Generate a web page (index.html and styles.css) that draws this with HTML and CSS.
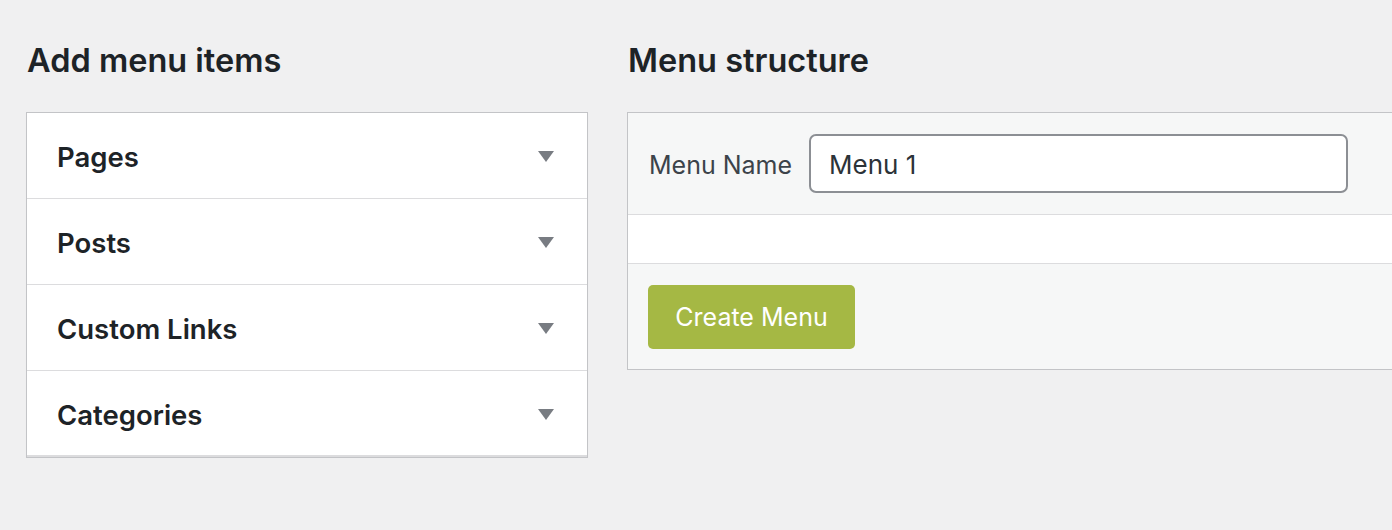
FILE: index.html
```html
<!DOCTYPE html>
<html>
<head>
<meta charset="utf-8">
<link rel="stylesheet" href="styles.css">
</head>
<body>
<div class="page">
  <div class="col-left">
    <h2 class="title">Add menu items</h2>
    <div class="accordion">
      <div class="acc-row"><span class="acc-label">Pages</span><span class="arrow"></span></div>
      <div class="acc-row"><span class="acc-label">Posts</span><span class="arrow"></span></div>
      <div class="acc-row"><span class="acc-label">Custom Links</span><span class="arrow"></span></div>
      <div class="acc-row"><span class="acc-label">Categories</span><span class="arrow"></span></div>
    </div>
  </div>
  <div class="col-right">
    <h2 class="title">Menu structure</h2>
    <div class="panel">
      <div class="panel-head">
        <label class="name-label">Menu Name</label>
        <div class="name-input">Menu 1</div>
      </div>
      <div class="panel-body"></div>
      <div class="panel-foot">
        <button class="create-btn">Create Menu</button>
      </div>
    </div>
  </div>
</div>
</body>
</html>
```
FILE: styles.css
```css
html, body {
  margin: 0;
  padding: 0;
  background: #f0f0f1;
  font-family: Inter, "Noto Sans", sans-serif;
  overflow: hidden;
}
.page {
  display: flex;
  gap: 39px;
  padding: 40px 0 0 26px;
  width: 1500px;
}
.col-left {
  width: 562px;
  flex: none;
}
.col-right {
  flex: 1;
}
.title {
  margin: 0 0 0 1px;
  height: 72px;
  font-size: 32.5px;
  font-weight: 600;
  color: #1d2327;
  line-height: 42px;
}
.accordion {
  background: #fff;
  border: 1px solid #c3c4c7;
  box-shadow: 0 1px 1px rgba(0,0,0,0.04);
}
.acc-row {
  height: 85px;
  border-bottom: 1px solid #dcdcde;
  display: flex;
  align-items: center;
  justify-content: space-between;
  padding: 0 33px 0 30px;
}
.acc-row:last-child {
  height: 84px;
  border-bottom: 2px solid #dcdcde;
}
.acc-label {
  font-size: 27.5px;
  font-weight: 600;
  color: #1d2327;
  padding-top: 3px;
}
.arrow {
  width: 0;
  height: 0;
  border-left: 8px solid transparent;
  border-right: 8px solid transparent;
  border-top: 11px solid #787c82;
  margin-top: 2px;
}
.panel {
  border: 1px solid #c3c4c7;
  border-right: none;
  background: #f6f7f7;
}
.panel-head {
  height: 101px;
  display: flex;
  align-items: center;
  padding-left: 21px;
  border-bottom: 1px solid #dcdcde;
}
.name-label {
  font-size: 25px;
  color: #3c434a;
  margin-right: 17px;
  padding-top: 3px;
}
.name-input {
  box-sizing: border-box;
  width: 539px;
  height: 59px;
  border: 2px solid #8c8f94;
  border-radius: 7px;
  background: #fff;
  font-size: 26px;
  color: #2c3338;
  display: flex;
  align-items: center;
  padding: 2px 0 0 18px;
}
.panel-body {
  height: 48px;
  background: #fff;
  border-bottom: 1px solid #dcdcde;
}
.panel-foot {
  height: 105px;
  padding: 21px 0 0 20px;
  box-sizing: border-box;
}
.create-btn {
  width: 207px;
  height: 64px;
  border: none;
  border-radius: 5px;
  background: #a5b844;
  color: #fff;
  font-family: Inter, "Noto Sans", sans-serif;
  font-size: 25px;
  padding: 0;
}
```
